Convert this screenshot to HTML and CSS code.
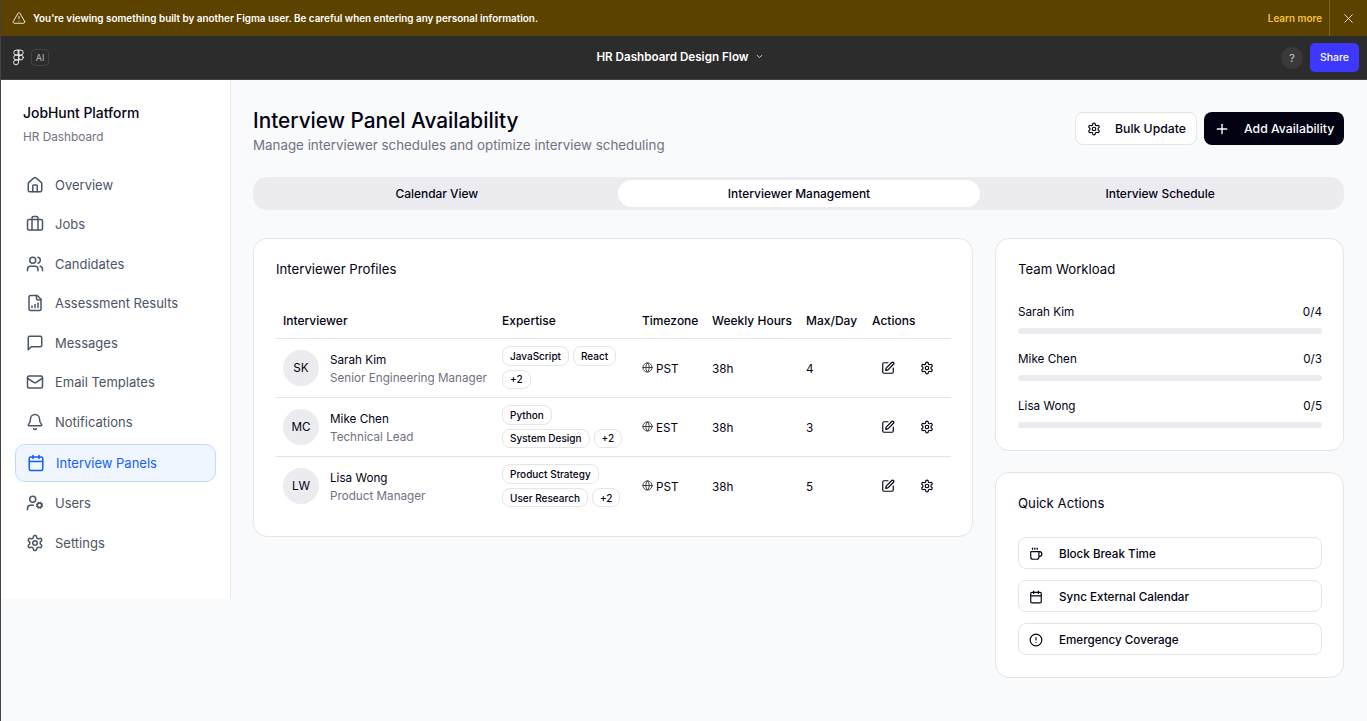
FILE: index.html
```html
<!DOCTYPE html>
<html lang="en">
<head>
    <meta charset="UTF-8">
    <meta name="viewport" content="width=device-width, initial-scale=1.0">
    <title>HR Dashboard Design Flow</title>
    <link rel="stylesheet" href="styles.css">
</head>
<body>
    <svg class="sprite" xmlns="http://www.w3.org/2000/svg">
        <symbol id="i-home" viewBox="0 0 24 24"><path d="M15 21v-8a1 1 0 0 0-1-1h-4a1 1 0 0 0-1 1v8"/><path d="M3 10a2 2 0 0 1 .709-1.528l7-5.999a2 2 0 0 1 2.582 0l7 5.999A2 2 0 0 1 21 10v9a2 2 0 0 1-2 2H5a2 2 0 0 1-2-2z"/></symbol>
        <symbol id="i-briefcase" viewBox="0 0 24 24"><path d="M16 20V4a2 2 0 0 0-2-2h-4a2 2 0 0 0-2 2v16"/><rect width="20" height="14" x="2" y="6" rx="2"/></symbol>
        <symbol id="i-users" viewBox="0 0 24 24"><path d="M16 21v-2a4 4 0 0 0-4-4H6a4 4 0 0 0-4 4v2"/><circle cx="9" cy="7" r="4"/><path d="M22 21v-2a4 4 0 0 0-3-3.87"/><path d="M16 3.13a4 4 0 0 1 0 7.75"/></symbol>
        <symbol id="i-file-chart" viewBox="0 0 24 24"><path d="M15 2H6a2 2 0 0 0-2 2v16a2 2 0 0 0 2 2h12a2 2 0 0 0 2-2V7Z"/><path d="M14 2v4a2 2 0 0 0 2 2h4"/><path d="M8 18v-2"/><path d="M12 18v-4"/><path d="M16 18v-6"/></symbol>
        <symbol id="i-message" viewBox="0 0 24 24"><path d="M21 15a2 2 0 0 1-2 2H7l-4 4V5a2 2 0 0 1 2-2h14a2 2 0 0 1 2 2z"/></symbol>
        <symbol id="i-mail" viewBox="0 0 24 24"><rect width="20" height="16" x="2" y="4" rx="2"/><path d="m22 7-8.97 5.7a1.94 1.94 0 0 1-2.06 0L2 7"/></symbol>
        <symbol id="i-bell" viewBox="0 0 24 24"><path d="M10.268 21a2 2 0 0 0 3.464 0"/><path d="M3.262 15.326A1 1 0 0 0 4 17h16a1 1 0 0 0 .74-1.673C19.41 13.956 18 12.499 18 8A6 6 0 0 0 6 8c0 4.499-1.411 5.956-2.738 7.326"/></symbol>
        <symbol id="i-calendar" viewBox="0 0 24 24"><path d="M8 2v4"/><path d="M16 2v4"/><rect width="18" height="18" x="3" y="4" rx="2"/><path d="M3 10h18"/></symbol>
        <symbol id="i-user-cog" viewBox="0 0 24 24"><circle cx="18" cy="15" r="3"/><circle cx="9" cy="7" r="4"/><path d="M10 15H6a4 4 0 0 0-4 4v2"/><path d="m21.7 16.4-.9-.3"/><path d="m15.2 13.9-.9-.3"/><path d="m16.6 18.7.3-.9"/><path d="m19.1 12.2.3-.9"/><path d="m19.6 18.7-.4-1"/><path d="m16.8 12.3-.4-1"/><path d="m14.3 16.6 1-.4"/><path d="m20.7 13.8 1-.4"/></symbol>
        <symbol id="i-settings" viewBox="0 0 24 24"><path d="M12.22 2h-.44a2 2 0 0 0-2 2v.18a2 2 0 0 1-1 1.73l-.43.25a2 2 0 0 1-2 0l-.15-.08a2 2 0 0 0-2.73.73l-.22.38a2 2 0 0 0 .73 2.73l.15.1a2 2 0 0 1 1 1.72v.51a2 2 0 0 1-1 1.74l-.15.09a2 2 0 0 0-.73 2.73l.22.38a2 2 0 0 0 2.73.73l.15-.08a2 2 0 0 1 2 0l.43.25a2 2 0 0 1 1 1.73V20a2 2 0 0 0 2 2h.44a2 2 0 0 0 2-2v-.18a2 2 0 0 1 1-1.73l.43-.25a2 2 0 0 1 2 0l.15.08a2 2 0 0 0 2.73-.73l.22-.39a2 2 0 0 0-.73-2.73l-.15-.08a2 2 0 0 1-1-1.74v-.5a2 2 0 0 1 1-1.74l.15-.09a2 2 0 0 0 .73-2.73l-.22-.38a2 2 0 0 0-2.73-.73l-.15.08a2 2 0 0 1-2 0l-.43-.25a2 2 0 0 1-1-1.73V4a2 2 0 0 0-2-2z"/><circle cx="12" cy="12" r="3"/></symbol>
        <symbol id="i-plus" viewBox="0 0 24 24"><path d="M5 12h14"/><path d="M12 5v14"/></symbol>
        <symbol id="i-globe" viewBox="0 0 24 24"><circle cx="12" cy="12" r="10"/><path d="M12 2a14.5 14.5 0 0 0 0 20 14.5 14.5 0 0 0 0-20"/><path d="M2 12h20"/></symbol>
        <symbol id="i-pen" viewBox="0 0 24 24"><path d="M12 3H5a2 2 0 0 0-2 2v14a2 2 0 0 0 2 2h14a2 2 0 0 0 2-2v-7"/><path d="M18.375 2.625a1 1 0 0 1 3 3l-9.013 9.014a2 2 0 0 1-.853.505l-2.873.84a.5.5 0 0 1-.62-.62l.84-2.873a2 2 0 0 1 .506-.852z"/></symbol>
        <symbol id="i-coffee" viewBox="0 0 24 24"><path d="M10 2v2"/><path d="M14 2v2"/><path d="M16 8a1 1 0 0 1 1 1v8a4 4 0 0 1-4 4H7a4 4 0 0 1-4-4V9a1 1 0 0 1 1-1h14a4 4 0 1 1 0 8h-1"/><path d="M6 2v2"/></symbol>
        <symbol id="i-alert" viewBox="0 0 24 24"><circle cx="12" cy="12" r="10"/><path d="M12 8v4"/><path d="M12 16h.01"/></symbol>
        <symbol id="i-warning" viewBox="0 0 24 24"><path d="m21.73 18-8-14a2 2 0 0 0-3.48 0l-8 14A2 2 0 0 0 4 21h16a2 2 0 0 0 1.73-3"/><path d="M12 9v4"/><path d="M12 17h.01"/></symbol>
        <symbol id="i-close" viewBox="0 0 24 24"><path d="M19 5 5 19"/><path d="m5 5 14 14"/></symbol>
        <symbol id="i-chevron" viewBox="0 0 24 24"><path d="m6 9 6 6 6-6"/></symbol>
        <symbol id="i-figma" viewBox="0 0 12 18"><path d="M6 1H3.5a2.5 2.5 0 0 0 0 5.33H6z"/><path d="M6 1h2.5a2.5 2.5 0 0 1 0 5.33H6z"/><path d="M6 6.33H3.5a2.67 2.67 0 0 0 0 5.34H6z"/><circle cx="8.6" cy="9" r="2.6"/><path d="M6 11.67H3.5a2.67 2.67 0 1 0 2.5 2.66z"/></symbol>
    </svg>

    <div class="banner">
        <svg class="icon banner-warning"><use href="#i-warning"/></svg>
        <span class="banner-text">You're viewing something built by another Figma user. Be careful when entering any personal information.</span>
        <a class="banner-link">Learn more</a>
        <div class="banner-close"><svg class="icon"><use href="#i-close"/></svg></div>
    </div>

    <div class="toolbar">
        <div class="toolbar-left">
            <svg class="icon figma-logo"><use href="#i-figma"/></svg>
            <span class="ai-badge">AI</span>
        </div>
        <div class="toolbar-title">HR Dashboard Design Flow <svg class="icon"><use href="#i-chevron"/></svg></div>
        <div class="toolbar-right">
            <span class="help-btn">?</span>
            <span class="share-btn">Share</span>
        </div>
    </div>

    <div class="app">
        <aside class="sidebar">
            <div class="brand">
                <h2>JobHunt Platform</h2>
                <p>HR Dashboard</p>
            </div>
            <nav class="nav">
                <a class="nav-item"><svg class="icon"><use href="#i-home"/></svg>Overview</a>
                <a class="nav-item"><svg class="icon"><use href="#i-briefcase"/></svg>Jobs</a>
                <a class="nav-item"><svg class="icon"><use href="#i-users"/></svg>Candidates</a>
                <a class="nav-item"><svg class="icon"><use href="#i-file-chart"/></svg>Assessment Results</a>
                <a class="nav-item"><svg class="icon"><use href="#i-message"/></svg>Messages</a>
                <a class="nav-item"><svg class="icon"><use href="#i-mail"/></svg>Email Templates</a>
                <a class="nav-item"><svg class="icon"><use href="#i-bell"/></svg>Notifications</a>
                <a class="nav-item active"><svg class="icon"><use href="#i-calendar"/></svg>Interview Panels</a>
                <a class="nav-item"><svg class="icon"><use href="#i-user-cog"/></svg>Users</a>
                <a class="nav-item"><svg class="icon"><use href="#i-settings"/></svg>Settings</a>
            </nav>
        </aside>

        <main class="main">
            <div class="page-header">
                <div>
                    <h1>Interview Panel Availability</h1>
                    <p>Manage interviewer schedules and optimize interview scheduling</p>
                </div>
                <div class="header-actions">
                    <button class="btn btn-outline"><svg class="icon"><use href="#i-settings"/></svg>Bulk Update</button>
                    <button class="btn btn-dark"><svg class="icon"><use href="#i-plus"/></svg>Add Availability</button>
                </div>
            </div>

            <div class="tabs">
                <div class="tab">Calendar View</div>
                <div class="tab active">Interviewer Management</div>
                <div class="tab">Interview Schedule</div>
            </div>

            <div class="columns">
                <section class="card profiles">
                    <h3>Interviewer Profiles</h3>
                    <table class="table">
                        <colgroup>
                            <col class="col-name"><col class="col-skills"><col class="col-zone"><col class="col-hours"><col class="col-max"><col class="col-actions">
                        </colgroup>
                        <thead>
                            <tr><th>Interviewer</th><th>Expertise</th><th>Timezone</th><th>Weekly Hours</th><th>Max/Day</th><th>Actions</th></tr>
                        </thead>
                        <tbody>
                            <tr>
                                <td>
                                    <div class="person">
                                        <span class="avatar">SK</span>
                                        <div class="person-info"><div>Sarah Kim</div><div class="person-role">Senior Engineering Manager</div></div>
                                    </div>
                                </td>
                                <td><div class="tags"><span class="tag">JavaScript</span><span class="tag">React</span><span class="tag">+2</span></div></td>
                                <td><div class="zone"><svg class="icon"><use href="#i-globe"/></svg>PST</div></td>
                                <td>38h</td>
                                <td>4</td>
                                <td><div class="row-actions"><svg class="icon"><use href="#i-pen"/></svg><svg class="icon"><use href="#i-settings"/></svg></div></td>
                            </tr>
                            <tr>
                                <td>
                                    <div class="person">
                                        <span class="avatar">MC</span>
                                        <div class="person-info"><div>Mike Chen</div><div class="person-role">Technical Lead</div></div>
                                    </div>
                                </td>
                                <td><div class="tags"><span class="tag">Python</span><span class="tag">System Design</span><span class="tag">+2</span></div></td>
                                <td><div class="zone"><svg class="icon"><use href="#i-globe"/></svg>EST</div></td>
                                <td>38h</td>
                                <td>3</td>
                                <td><div class="row-actions"><svg class="icon"><use href="#i-pen"/></svg><svg class="icon"><use href="#i-settings"/></svg></div></td>
                            </tr>
                            <tr>
                                <td>
                                    <div class="person">
                                        <span class="avatar">LW</span>
                                        <div class="person-info"><div>Lisa Wong</div><div class="person-role">Product Manager</div></div>
                                    </div>
                                </td>
                                <td><div class="tags"><span class="tag">Product Strategy</span><span class="tag">User Research</span><span class="tag">+2</span></div></td>
                                <td><div class="zone"><svg class="icon"><use href="#i-globe"/></svg>PST</div></td>
                                <td>38h</td>
                                <td>5</td>
                                <td><div class="row-actions"><svg class="icon"><use href="#i-pen"/></svg><svg class="icon"><use href="#i-settings"/></svg></div></td>
                            </tr>
                        </tbody>
                    </table>
                </section>

                <div class="side-col">
                    <section class="card workload">
                        <h3>Team Workload</h3>
                        <div class="load-list">
                            <div class="load">
                                <div class="load-row"><span>Sarah Kim</span><span>0/4</span></div>
                                <div class="load-bar"></div>
                            </div>
                            <div class="load">
                                <div class="load-row"><span>Mike Chen</span><span>0/3</span></div>
                                <div class="load-bar"></div>
                            </div>
                            <div class="load">
                                <div class="load-row"><span>Lisa Wong</span><span>0/5</span></div>
                                <div class="load-bar"></div>
                            </div>
                        </div>
                    </section>
                    <section class="card quick">
                        <h3>Quick Actions</h3>
                        <div class="quick-list">
                            <button class="quick-btn"><svg class="icon"><use href="#i-coffee"/></svg>Block Break Time</button>
                            <button class="quick-btn"><svg class="icon"><use href="#i-calendar"/></svg>Sync External Calendar</button>
                            <button class="quick-btn"><svg class="icon"><use href="#i-alert"/></svg>Emergency Coverage</button>
                        </div>
                    </section>
                </div>
            </div>
        </main>
    </div>
</body>
</html>
```

FILE: styles.css
```css
* {
    box-sizing: border-box;
}

html, body {
    height: 100%;
}

body {
    margin: 0;
    font-family: 'Inter', sans-serif;
    font-size: 14px;
    color: #030213;
    background: #f9fafb;
    overflow: hidden;
    border-left: 1px solid #444;
}

h1, h2, h3, p {
    margin: 0;
    font-weight: 500;
}

.sprite {
    display: none;
}

.icon {
    width: 16px;
    height: 16px;
    flex: none;
    fill: none;
    stroke: currentColor;
    stroke-width: 2;
    stroke-linecap: round;
    stroke-linejoin: round;
}

/* figma chrome */
.banner {
    height: 36px;
    background: #5c4200;
    color: #fff;
    display: flex;
    align-items: center;
    padding-left: 11px;
    font-size: 9.9px;
    font-weight: 600;
}

.banner-warning {
    width: 14px;
    height: 14px;
    stroke-width: 1.5;
    margin-right: 7px;
}

.banner-text {
    flex: 1;
}

.banner-link {
    color: #f5c33b;
    margin-right: 7px;
}

.banner-close {
    width: 38px;
    height: 36px;
    border-left: 1px solid #7a6220;
    display: flex;
    align-items: center;
    justify-content: center;
}

.banner-close .icon {
    width: 13px;
    height: 13px;
    stroke-width: 1.5;
}

.toolbar {
    height: 44px;
    background: #2c2c2c;
    border-bottom: 1px solid #444;
    display: flex;
    align-items: center;
    justify-content: space-between;
    padding: 0 8px 0 12px;
    color: #fff;
}

.toolbar-left, .toolbar-right {
    display: flex;
    align-items: center;
    width: 120px;
}

.toolbar-right {
    justify-content: flex-end;
    gap: 7px;
}

.figma-logo {
    width: 11px;
    height: 17px;
    stroke-width: 1;
    margin-right: 7px;
}

.ai-badge {
    width: 18px;
    height: 17px;
    border: 1px solid #444;
    border-radius: 4px;
    font-size: 9px;
    color: #bbb;
    display: flex;
    align-items: center;
    justify-content: center;
}

.toolbar-title {
    font-size: 11.65px;
    font-weight: 600;
    display: flex;
    align-items: center;
    gap: 6px;
    margin: 0 12px 2px 0;
}

.toolbar-title .icon {
    width: 9px;
    height: 9px;
    stroke-width: 2.5;
    color: #ddd;
}

.help-btn {
    width: 22px;
    height: 22px;
    border-radius: 50%;
    background: #3a3a3a;
    color: #ccc;
    font-size: 11px;
    display: flex;
    align-items: center;
    justify-content: center;
}

.share-btn {
    width: 49px;
    height: 29px;
    border-radius: 5px;
    background: #3d37ff;
    font-size: 10.5px;
    font-weight: 500;
    display: flex;
    align-items: center;
    justify-content: center;
}

/* app */
.app {
    display: flex;
    align-items: flex-start;
}

.sidebar {
    width: 230px;
    height: 519px;
    flex: none;
    background: #fff;
    border-right: 1px solid #e5e7eb;
    padding: 23px 14px 0;
}

.brand {
    padding: 0 8px;
}

.brand h2 {
    font-size: 13.9px;
    line-height: 20px;
}

.brand p {
    font-size: 11.8px;
    font-weight: 400;
    color: #717182;
    line-height: 18px;
    margin-top: 5px;
}

.nav {
    margin-top: 21px;
    display: flex;
    flex-direction: column;
    gap: 4px;
}

.nav-item {
    height: 35.5px;
    display: flex;
    align-items: center;
    gap: 11px;
    padding: 0 11px;
    color: #4a5565;
    font-size: 13px;
    border-radius: 10px;
}

.nav-item .icon {
    width: 18px;
    height: 18px;
}

.nav-item.active {
    height: 38px;
    color: #155dfc;
    background: #eff6ff;
    border: 1px solid #bedbff;
}

.main {
    flex: 1;
    padding: 24px 23px 0 22px;
    min-width: 0;
}

.page-header {
    display: flex;
    justify-content: space-between;
    align-items: flex-start;
}

.page-header h1 {
    font-size: 20.8px;
    line-height: 31px;
    margin-top: 1px;
}

.page-header p {
    font-size: 13.35px;
    font-weight: 400;
    color: #717182;
    line-height: 18px;
}

.header-actions {
    display: flex;
    gap: 7px;
    margin-top: 8px;
}

.btn {
    height: 33px;
    border-radius: 8px;
    font-family: inherit;
    font-size: 12.25px;
    font-weight: 500;
    white-space: nowrap;
    display: flex;
    align-items: center;
    gap: 14px;
    padding-top: 1px;
    cursor: pointer;
}

.btn-outline {
    width: 122px;
    padding-left: 11px;
    padding-right: 10px;
    background: #fff;
    color: #030213;
    border: 1px solid #e5e5e5;
}

.btn-outline .icon {
    width: 14px;
    height: 14px;
}

.btn-dark {
    width: 140px;
    padding-left: 10px;
    padding-right: 10px;
    background: #030213;
    color: #fff;
    border: 0;
}

.tabs {
    margin-top: 23px;
    height: 33px;
    background: #ececf0;
    border-radius: 14px;
    padding: 3px;
    display: grid;
    grid-template-columns: repeat(3, 1fr);
}

.tab {
    display: flex;
    align-items: center;
    justify-content: center;
    font-size: 11.95px;
    font-weight: 500;
    border-radius: 14px;
}

.tab.active {
    background: #fff;
    margin-right: -1px;
}

.columns {
    margin-top: 28px;
    display: flex;
    align-items: flex-start;
    gap: 22px;
}

.card {
    background: #fff;
    border: 1px solid #e5e5e5;
    border-radius: 14px;
    padding: 20px 21px 0 22px;
}

.card h3 {
    font-size: 13.2px;
    font-weight: 400;
    line-height: 20px;
}

.profiles {
    width: 720px;
    height: 299px;
}

.table {
    width: 675px;
    margin-top: 25px;
    border-collapse: collapse;
    table-layout: fixed;
    font-size: 11.7px;
}

.col-name { width: 219px; }
.col-skills { width: 140px; }
.col-zone { width: 70px; }
.col-hours { width: 94px; }
.col-max { width: 66px; }
.col-actions { width: 86px; }

.table th {
    height: 34px;
    padding: 0 7px;
    font-size: 12px;
    font-weight: 500;
    text-align: left;
    white-space: nowrap;
    border-bottom: 1px solid #e5e5e5;
}

.table td {
    height: 59px;
    padding: 0 7px;
    border-bottom: 1px solid #e5e5e5;
    white-space: nowrap;
}

.table td:nth-child(n+3) {
    padding-top: 2px;
}

.table tbody tr:last-child td {
    border-bottom: 0;
}

.person {
    display: flex;
    align-items: center;
    gap: 11px;
}

.person-info {
    line-height: 18px;
    padding-top: 3px;
}

.avatar {
    width: 36px;
    height: 36px;
    border-radius: 50%;
    background: #ececf0;
    display: flex;
    align-items: center;
    justify-content: center;
    flex: none;
}

.person-role {
    color: #717182;
}

.tags {
    display: flex;
    flex-wrap: wrap;
    gap: 4px;
}

.tag {
    height: 19.5px;
    padding: 0 7px;
    border: 1px solid #e5e5e5;
    border-radius: 8px;
    font-size: 10px;
    font-weight: 500;
    display: flex;
    align-items: center;
}

.zone {
    display: flex;
    align-items: center;
    gap: 3px;
}

.zone .icon {
    width: 11px;
    height: 11px;
    margin-bottom: 2px;
    color: #333;
}

.row-actions {
    display: flex;
    gap: 25px;
    padding-left: 9px;
    margin-top: -2px;
}

.row-actions .icon {
    width: 14px;
    height: 14px;
}

.side-col {
    width: 349px;
    display: flex;
    flex-direction: column;
    gap: 21px;
}

.workload {
    height: 213px;
}

.load-list {
    margin-top: 24px;
    display: flex;
    flex-direction: column;
    gap: 16px;
}

.load-row {
    display: flex;
    justify-content: space-between;
    font-size: 11.7px;
    line-height: 18px;
    margin-bottom: 7px;
}

.load-bar {
    height: 6px;
    border-radius: 3px;
    background: #ececf0;
}

.quick {
    height: 206px;
}

.quick-list {
    margin-top: 24px;
    display: flex;
    flex-direction: column;
    gap: 11px;
}

.quick-btn {
    height: 32px;
    background: #fff;
    border: 1px solid #e5e5e5;
    border-radius: 8px;
    color: #030213;
    font-family: inherit;
    font-size: 11.65px;
    font-weight: 500;
    padding: 1px 10px 0;
    display: flex;
    align-items: center;
    gap: 16px;
}

.quick-btn .icon {
    width: 14px;
    height: 14px;
}
```
